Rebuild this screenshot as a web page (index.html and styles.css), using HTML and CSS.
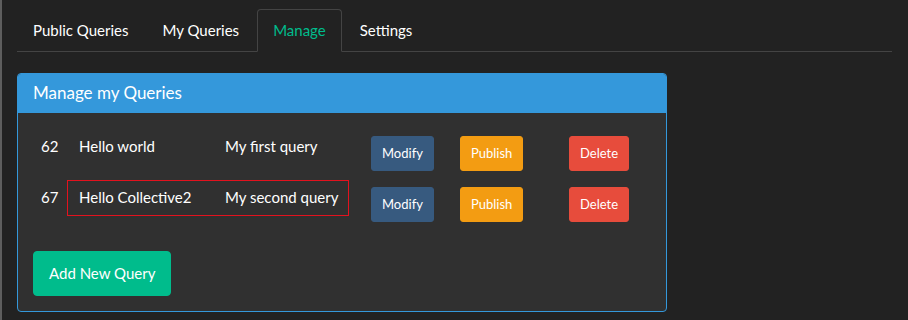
FILE: index.html
```html
<!DOCTYPE html>
<html>
<head>
<meta charset="utf-8">
<link rel="stylesheet" href="styles.css">
</head>
<body>
<div class="page">
  <ul class="tabs">
    <li class="tab">Public Queries</li>
    <li class="tab">My Queries</li>
    <li class="tab active">Manage</li>
    <li class="tab">Settings</li>
  </ul>
  <div class="panel">
    <div class="panel-heading">Manage my Queries</div>
    <div class="panel-body">
      <table class="queries">
        <tr>
          <td class="c-id">62</td>
          <td class="c-name">Hello world</td>
          <td class="c-desc">My first query</td>
          <td class="c-mod"><button class="btn btn-primary">Modify</button></td>
          <td class="c-pub"><button class="btn btn-warning">Publish</button></td>
          <td class="c-del"><button class="btn btn-danger">Delete</button></td>
        </tr>
        <tr class="marked">
          <td class="c-id">67<span class="highlight"></span></td>
          <td class="c-name">Hello Collective2</td>
          <td class="c-desc">My second query</td>
          <td class="c-mod"><button class="btn btn-primary">Modify</button></td>
          <td class="c-pub"><button class="btn btn-warning">Publish</button></td>
          <td class="c-del"><button class="btn btn-danger">Delete</button></td>
        </tr>
      </table>
      <button class="btn-add">Add New Query</button>
    </div>
  </div>
</div>
</body>
</html>
```

FILE: styles.css
```css
html, body {
  margin: 0;
  padding: 0;
  background: #222222;
  height: 100%;
}
body {
  font-family: Lato, "Open Sans", sans-serif;
  font-size: 15px;
  line-height: 21px;
  color: #ffffff;
  border-left: 2px solid #5e5e5e;
  box-sizing: border-box;
  overflow: hidden;
}
.page {
  padding: 9px 16px 0 15px;
}
.tabs {
  list-style: none;
  margin: 0;
  padding: 0;
  display: flex;
  border-bottom: 1px solid #444444;
}
.tab {
  padding: 10px 15px;
  border: 1px solid transparent;
  border-radius: 4px 4px 0 0;
  margin-right: 2px;
  margin-bottom: -1px;
  color: #ffffff;
}
.tab.active {
  color: #00bc8c;
  background: #222222;
  border-color: #444444 #444444 transparent;
}
.panel {
  margin-top: 21px;
  width: 650px;
  box-sizing: border-box;
  border: 1px solid #3498db;
  border-radius: 4px;
  background: #303030;
}
.panel-heading {
  background: #3498db;
  padding: 9px 15px 10px;
  font-size: 17px;
  line-height: 20px;
  border-radius: 3px 3px 0 0;
}
.panel-body {
  padding: 15px 15px 15px;
}
.queries {
  border-collapse: collapse;
  margin-bottom: 21px;
}
.queries td {
  padding: 8px;
  vertical-align: top;
  box-sizing: border-box;
}
.c-id { width: 38px; position: relative; }
.c-name { width: 146px; }
.c-desc { width: 146px; }
.c-mod { width: 89px; }
.c-pub { width: 109px; }
.c-del { width: 89px; }
.highlight {
  position: absolute;
  left: 34px;
  top: 1px;
  width: 282px;
  height: 36px;
  box-sizing: border-box;
  border: 1px solid #e3121e;
}
.btn {
  font-family: Lato, "Open Sans", sans-serif;
  font-size: 13px;
  line-height: 19px;
  padding: 7px 10px;
  border: 1px solid transparent;
  border-radius: 3px;
  color: #ffffff;
  display: block;
}
.btn-primary { background: #375a7f; border-color: #375a7f; }
.btn-warning { background: #f39c12; border-color: #f39c12; }
.btn-danger { background: #e74c3c; border-color: #e74c3c; }
.btn-add {
  font-family: Lato, "Open Sans", sans-serif;
  font-size: 15px;
  line-height: 21px;
  padding: 11px 15px;
  border: 1px solid #00bc8c;
  border-radius: 4px;
  background: #00bc8c;
  color: #ffffff;
  display: block;
}
```
